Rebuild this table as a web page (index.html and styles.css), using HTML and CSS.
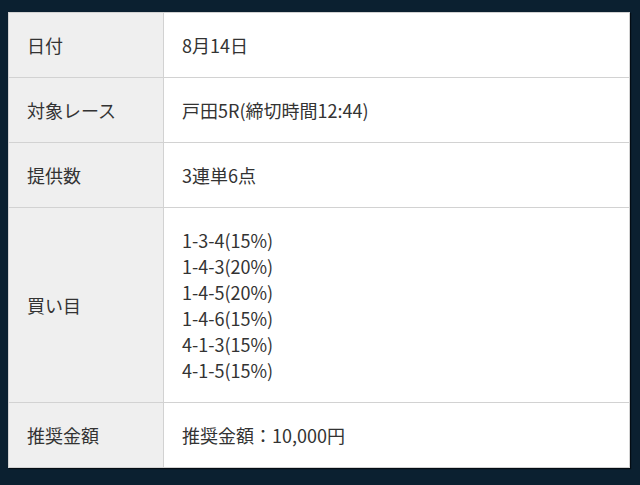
FILE: index.html
```html
<!DOCTYPE html>
<html lang="ja">
<head>
<meta charset="utf-8">
<link rel="stylesheet" href="styles.css">
</head>
<body>
<div class="frame">
<table class="info">
<tr><th>日付</th><td>8月14日</td></tr>
<tr><th>対象レース</th><td>戸田5R(締切時間12:44)</td></tr>
<tr><th>提供数</th><td>3連単6点</td></tr>
<tr><th>買い目</th><td>1-3-4(15%)<br>1-4-3(20%)<br>1-4-5(20%)<br>1-4-6(15%)<br>4-1-3(15%)<br>4-1-5(15%)</td></tr>
<tr><th>推奨金額</th><td>推奨金額：10,000円</td></tr>
</table>
</div>
</body>
</html>
```
FILE: styles.css
```css
html, body {
  margin: 0;
  padding: 0;
  background: #0b2030;
}
body {
  width: 640px;
  height: 485px;
  overflow: hidden;
}
.frame {
  padding: 12px 10px 0 8px;
}
.info {
  width: 622px;
  border-collapse: collapse;
  background: #ffffff;
  box-shadow: 1px 1px 1px rgba(0, 0, 0, 0.6);
  font-family: "Noto Sans CJK JP", "Noto Sans", sans-serif;
  font-size: 18px;
  line-height: 26px;
  color: #333333;
}
.info th,
.info td {
  border: 1px solid #d2d2d2;
  padding: 19px 18px;
  text-align: left;
  vertical-align: middle;
  font-weight: normal;
}
.info th {
  width: 118px;
  background: #efefef;
}
.info td {
  background: #ffffff;
}
```
